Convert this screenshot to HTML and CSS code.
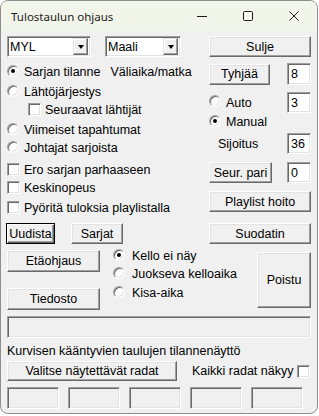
FILE: index.html
```html
<!DOCTYPE html>
<html lang="fi">
<head>
    <meta charset="UTF-8">
    <meta name="viewport" content="width=device-width, initial-scale=1.0">
    <title>Tulostaulun ohjaus</title>
    <link rel="stylesheet" href="styles.css">
</head>
<body>
    <div class="window">
        <div class="titlebar">
            <span class="title">Tulostaulun ohjaus</span>
            <div class="caps">
                <span class="cap">
                    <svg width="10" height="10" viewBox="0 0 10 10"><path d="M0 5.5h10" stroke="#1b1b1b" stroke-width="1"/></svg>
                </span>
                <span class="cap">
                    <svg width="10" height="10" viewBox="0 0 10 10"><rect x="0.5" y="0.5" width="9" height="9" rx="1" fill="none" stroke="#1b1b1b" stroke-width="1"/></svg>
                </span>
                <span class="cap">
                    <svg width="10" height="10" viewBox="0 0 10 10"><path d="M0.5 0.5l9 9M9.5 0.5l-9 9" stroke="#1b1b1b" stroke-width="1"/></svg>
                </span>
            </div>
        </div>

        <div class="client">
            <div class="top">
                <div class="col-left">
                    <div class="combos">
                        <div class="combo combo-a"><span>MYL</span><span class="drop"><i class="arrow"></i></span></div>
                        <div class="combo combo-b"><span>Maali</span><span class="drop"><i class="arrow"></i></span></div>
                    </div>
                    <div class="row r1"><span class="radio on"></span>Sarjan tilanne<span class="aside">Väliaika/matka</span></div>
                    <div class="row r2"><span class="radio"></span>Lähtöjärjestys</div>
                    <div class="row r3 indent"><span class="check"></span>Seuraavat lähtijät</div>
                    <div class="row r4"><span class="radio"></span>Viimeiset tapahtumat</div>
                    <div class="row r5"><span class="radio"></span>Johtajat sarjoista</div>
                    <div class="row r6"><span class="check"></span>Ero sarjan parhaaseen</div>
                    <div class="row r7"><span class="check"></span>Keskinopeus</div>
                    <div class="row r8"><span class="check"></span>Pyöritä tuloksia playlistalla</div>
                    <div class="btn-row">
                        <button class="btn default btn-uudista">Uudista</button>
                        <button class="btn btn-sarjat">Sarjat</button>
                    </div>
                </div>

                <div class="col-right">
                    <button class="btn btn-sulje">Sulje</button>
                    <div class="pair p-tyhjaa">
                        <button class="btn btn-tyhjaa">Tyhjää</button>
                        <span class="edit">8</span>
                    </div>
                    <div class="pair p-auto">
                        <span class="opt"><span class="radio"></span>Auto</span>
                        <span class="edit">3</span>
                    </div>
                    <div class="row p-manual"><span class="radio on"></span>Manual</div>
                    <div class="pair p-sijoitus">
                        <span class="label">Sijoitus</span>
                        <span class="edit">36</span>
                    </div>
                    <div class="pair p-seur">
                        <button class="btn btn-seur">Seur. pari</button>
                        <span class="edit">0</span>
                    </div>
                    <button class="btn btn-playlist">Playlist hoito</button>
                    <button class="btn btn-suodatin">Suodatin</button>
                </div>
            </div>

            <div class="middle">
                <div class="col-files">
                    <button class="btn btn-eta">Etäohjaus</button>
                    <button class="btn btn-tiedosto">Tiedosto</button>
                </div>
                <div class="col-clock">
                    <div class="row c1"><span class="radio on"></span>Kello ei näy</div>
                    <div class="row c2"><span class="radio"></span>Juokseva kelloaika</div>
                    <div class="row c3"><span class="radio"></span>Kisa-aika</div>
                </div>
                <button class="btn btn-poistu">Poistu</button>
            </div>

            <div class="status"></div>

            <div class="row caption">Kurvisen kääntyvien taulujen tilannenäyttö</div>

            <div class="lanes">
                <button class="btn btn-valitse">Valitse näytettävät radat</button>
                <span class="all">Kaikki radat näkyy<span class="check"></span></span>
            </div>

            <div class="boxes">
                <span class="box"></span>
                <span class="box"></span>
                <span class="box"></span>
                <span class="box"></span>
                <span class="box"></span>
            </div>
        </div>
    </div>
</body>
</html>
```

FILE: styles.css
```css
/* Page and window frame */
body {
    margin: 0;
    background: #ffffff;
    font-family: "Liberation Sans", Arial, sans-serif;
    font-size: 12.5px;
    color: #000;
}

.window {
    width: 318px;
    height: 414px;
    box-sizing: border-box;
    border: 1px solid #8e8e8e;
    border-radius: 8px;
    overflow: hidden;
    background: #f0f0f0;
    display: flex;
    flex-direction: column;
}

/* Title bar */
.titlebar {
    flex: none;
    height: 30px;
    background: #f2f5e9;
    display: flex;
    align-items: center;
}

.title {
    flex: 1;
    margin-left: 10px;
    font-family: "Noto Sans", sans-serif;
    font-size: 11.5px;
    color: #1a1a1a;
}

.caps {
    display: flex;
    align-self: stretch;
}

.cap {
    width: 46px;
    display: flex;
    align-items: center;
    justify-content: center;
}

/* Client area */
.client {
    flex: 1;
    padding: 0 6px 0 6px;
}

.top {
    display: grid;
    grid-template-columns: 202px 102px;
}

.col-left,
.col-right {
    display: flex;
    flex-direction: column;
}

/* Rows of radios and checks */
.row {
    display: flex;
    align-items: center;
    height: 18px;
    white-space: nowrap;
}

.radio {
    flex: none;
    position: relative;
    width: 12px;
    height: 12px;
    box-sizing: border-box;
    margin-right: 5px;
    margin-bottom: 3px;
    border-radius: 50%;
    background: #fff;
    border: 1px solid;
    border-color: #a0a0a0 #ffffff #ffffff #a0a0a0;
    box-shadow: inset 1px 1px 0 #696969, inset -1px -1px 0 #e3e3e3;
}

.radio.on::after {
    content: "";
    position: absolute;
    left: 3px;
    top: 3px;
    width: 4px;
    height: 4px;
    border-radius: 50%;
    background: #000;
}

.check {
    flex: none;
    width: 13px;
    height: 13px;
    box-sizing: border-box;
    margin-right: 4px;
    margin-bottom: 2px;
    background: #fff;
    border: 1px solid;
    border-color: #a0a0a0 #ffffff #ffffff #a0a0a0;
    box-shadow: inset 1px 1px 0 #696969, inset -1px -1px 0 #e3e3e3;
}

.aside {
    margin-left: 10px;
}

.indent {
    padding-left: 21px;
}

.combos {
    display: flex;
    gap: 14px;
    margin-top: 5px;
    height: 21px;
}

.combo {
    box-sizing: border-box;
    height: 21px;
    display: flex;
    align-items: center;
    justify-content: space-between;
    padding: 0 2px 0 2px;
    background: #fff;
    border: 1px solid;
    border-color: #a0a0a0 #ffffff #ffffff #a0a0a0;
    box-shadow: inset 1px 1px 0 #696969, inset -1px -1px 0 #e3e3e3;
}

.combo-a { width: 84px; }
.combo-b { width: 76px; }

.drop {
    box-sizing: border-box;
    width: 15px;
    height: 17px;
    display: flex;
    align-items: center;
    justify-content: center;
    background: #f0f0f0;
    border: 1px solid;
    border-color: #e3e3e3 #696969 #696969 #e3e3e3;
    box-shadow: inset -1px -1px 0 #a0a0a0, inset 1px 1px 0 #fff;
}

.arrow {
    width: 0;
    height: 0;
    border-left: 3.5px solid transparent;
    border-right: 3.5px solid transparent;
    border-top: 4px solid #000;
}

.r1 { margin-top: 6px; }
.r2 { margin-top: 2px; }
.r4 { margin-top: 2px; }
.r6 { margin-top: 4px; }
.r8 { margin-top: 2px; }

/* Classic push buttons */
.btn {
    box-sizing: border-box;
    height: 21px;
    padding: 0;
    margin: 0;
    display: flex;
    align-items: center;
    justify-content: center;
    font: inherit;
    color: #000;
    background: #f0f0f0;
    border: 1px solid;
    border-color: #ffffff #696969 #696969 #ffffff;
    box-shadow: inset -1px -1px 0 #a0a0a0, inset 1px 1px 0 #e3e3e3;
}

.btn.default {
    border-color: #000;
    box-shadow: inset 1px 1px 0 #fff, inset -1px -1px 0 #696969, inset -2px -2px 0 #a0a0a0;
}

.btn-row {
    display: flex;
    margin-top: 6px;
}

.btn-uudista { width: 49px; margin-left: -1px; }
.btn-sarjat { width: 52px; margin-left: 16px; }

/* Right column */
.btn-sulje { margin-top: 5px; }

.pair {
    display: flex;
    align-items: center;
    justify-content: space-between;
    height: 21px;
}

.edit {
    box-sizing: border-box;
    width: 24px;
    height: 21px;
    padding-left: 3px;
    display: flex;
    align-items: center;
    background: #fff;
    border: 1px solid;
    border-color: #a0a0a0 #ffffff #ffffff #a0a0a0;
    box-shadow: inset 1px 1px 0 #696969, inset -1px -1px 0 #e3e3e3;
}

.p-tyhjaa { margin-top: 6px; height: 22px; }
.p-tyhjaa .edit { height: 22px; }
.btn-tyhjaa { width: 61px; }

.opt {
    display: flex;
    align-items: center;
}

.p-auto { margin-top: 7px; }
.p-manual { margin-top: 0; }
.p-sijoitus { margin-top: 2px; }
.label { margin-left: 9px; }

.p-seur { margin-top: 8px; }
.btn-seur { width: 63px; }

.btn-playlist { margin-top: 8px; }
.btn-suodatin { margin-top: 11px; }

/* Middle block */
.middle {
    display: flex;
    height: 66px;
}

.col-files {
    display: flex;
    flex-direction: column;
    width: 93px;
}

.btn-eta { margin-top: 6px; height: 22px; }
.btn-tiedosto { margin-top: 16px; height: 22px; }

.col-clock {
    display: flex;
    flex-direction: column;
    margin-left: 13px;
    padding-top: 3px;
}

.c3 { margin-top: 1px; }
.col-clock .radio { margin-right: 7px; }

.btn-poistu {
    margin-left: auto;
    margin-top: 8px;
    width: 54px;
    height: 56px;
}

/* Status and lanes */
.status {
    margin-top: 6px;
    height: 22px;
    box-sizing: border-box;
    background: #f0f0f0;
    border: 1px solid;
    border-color: #a0a0a0 #ffffff #ffffff #a0a0a0;
    box-shadow: inset 1px 1px 0 #696969, inset -1px -1px 0 #e3e3e3;
}

.caption { margin-top: 4px; }

.lanes {
    display: flex;
    align-items: center;
    margin-top: 1px;
    height: 20px;
}

.btn-valitse { width: 170px; height: 20px; }

.all {
    display: flex;
    align-items: center;
    margin-left: 15px;
    white-space: nowrap;
}

.all .check { margin: 0 0 0 4px; }

.boxes {
    display: grid;
    grid-template-columns: repeat(5, 52px);
    gap: 9px;
    margin-top: 6px;
}

.box {
    height: 22px;
    box-sizing: border-box;
    background: #f0f0f0;
    border: 1px solid;
    border-color: #a0a0a0 #ffffff #ffffff #a0a0a0;
    box-shadow: inset 1px 1px 0 #696969, inset -1px -1px 0 #e3e3e3;
}
```
